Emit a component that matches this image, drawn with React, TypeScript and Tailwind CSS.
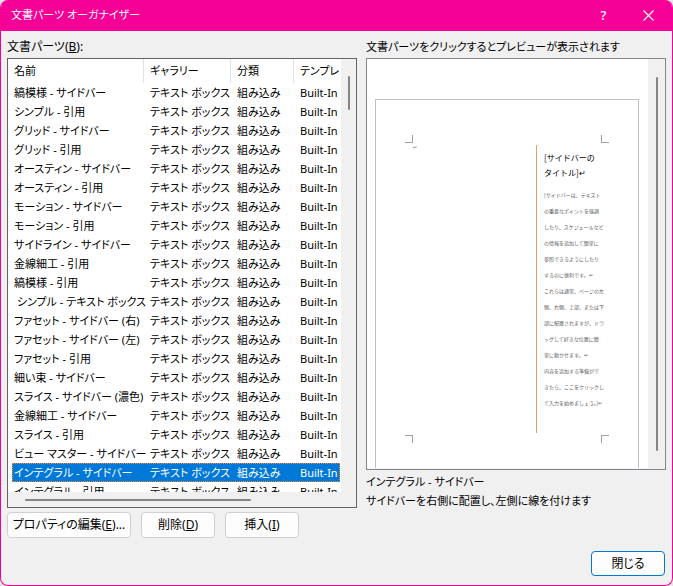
import { useState } from "react";

type Part = { name: string; gallery: string; category: string; template: string };

const names = [
  "縞模様 - サイドバー",
  "シンプル - 引用",
  "グリッド - サイドバー",
  "グリッド - 引用",
  "オースティン - サイドバー",
  "オースティン - 引用",
  "モーション - サイドバー",
  "モーション - 引用",
  "サイドライン - サイドバー",
  "金線細工 - 引用",
  "縞模様 - 引用",
  "\u00a0シンプル - テキスト ボックス",
  "ファセット - サイドバー (右)",
  "ファセット - サイドバー (左)",
  "ファセット - 引用",
  "細い束 - サイドバー",
  "スライス - サイドバー (濃色)",
  "金線細工 - サイドバー",
  "スライス - 引用",
  "ビュー マスター - サイドバー",
  "インテグラル - サイドバー",
  "インテグラル - 引用",
];

const parts: Part[] = names.map((name) => ({
  name,
  gallery: "テキスト ボックス",
  category: "組み込み",
  template: "Built-In",
}));

const columns = ["名前", "ギャラリー", "分類", "テンプレート"];

const sidebarLines = [
  "[サイドバーは、テキスト",
  "の重要なポイントを強調",
  "したり、スケジュールなど",
  "の情報を追加して簡単に",
  "参照できるようにしたり",
  "するのに便利です。↵",
  "これらは通常、ページの左",
  "側、右側、上部、または下",
  "部に配置されますが、ドラ",
  "ッグして好きな位置に簡",
  "単に動かせます。↵",
  "内容を追加する準備がで",
  "きたら、ここをクリックし",
  "て入力を始めましょう。]↵",
];

function TitleBar() {
  return (
    <header className="flex h-[31px] shrink-0 items-center bg-[#f50097] pl-[10px] text-white">
      <h1 className="flex-1">文書パーツ オーガナイザー</h1>
      <button type="button" aria-label="ヘルプ" className="h-full w-[43px] text-[13px] font-medium">
        ?
      </button>
      <button type="button" aria-label="閉じる" className="flex h-full w-[47px] items-center justify-center">
        <svg width="11" height="11" viewBox="0 0 11 11" fill="none" stroke="currentColor" strokeWidth="1.1">
          <path d="M0.5 0.5L10.5 10.5M10.5 0.5L0.5 10.5" />
        </svg>
      </button>
    </header>
  );
}

function PartsList({ selected, onSelect }: { selected: number; onSelect: (index: number) => void }) {
  return (
    <div className="flex min-h-0 flex-1 border border-[#646464]">
      <div className="flex min-w-0 flex-1 flex-col">
        <div className="min-h-0 flex-1 overflow-hidden bg-white pr-px pl-1">
          <table
            aria-labelledby="parts-label"
            className="w-full table-fixed border-separate border-spacing-0 leading-[18px]"
          >
            <colgroup>
              <col className="w-[132px]" />
              <col className="w-[87px]" />
              <col className="w-[63px]" />
              <col />
            </colgroup>
            <thead>
              <tr className="h-6">
                {columns.map((column) => (
                  <th
                    key={column}
                    className="overflow-hidden border-r border-[#e2e2e2] pl-[6px] text-left font-normal whitespace-nowrap first:pl-[2px] last:border-r-0"
                  >
                    {column}
                  </th>
                ))}
              </tr>
            </thead>
            <tbody>
              {parts.map((part, index) => (
                <tr
                  key={part.name}
                  aria-selected={index === selected}
                  onClick={() => onSelect(index)}
                  className={`h-[19px] cursor-default whitespace-nowrap ${
                    index === selected
                      ? "bg-[#0078d7] text-white outline-1 -outline-offset-1 outline-dotted outline-[#ff8728]"
                      : ""
                  }`}
                >
                  <td className="pl-[2px]">{part.name}</td>
                  <td className="pl-[6px]">{part.gallery}</td>
                  <td className="pl-[6px]">{part.category}</td>
                  <td className="pl-[6px]">{part.template}</td>
                </tr>
              ))}
            </tbody>
          </table>
        </div>
        <div className="flex h-[15px] shrink-0 items-center pl-[17px]">
          <div className="h-[2px] w-[226px] rounded-full bg-[#858585]" />
        </div>
      </div>
      <div className="flex w-[15px] shrink-0 justify-center pt-[17px]">
        <div className="h-[34px] w-[2px] rounded-full bg-[#858585]" />
      </div>
    </div>
  );
}

function Preview() {
  return (
    <div className="flex min-h-0 flex-1 border border-[#828790] pb-px">
      <div className="min-w-0 flex-1 overflow-hidden bg-white pt-10 pr-[9px] pl-2">
        <div className="h-full border border-b-0 border-[#bfbfbf] px-[29px] pt-[35px]">
          <div className="flex justify-between">
            <span className="size-2 border-r border-b border-[#a0a0a0]" />
            <span className="size-2 border-b border-l border-[#a0a0a0]" />
          </div>
          <div className="mt-[2px] flex justify-between">
            <span className="pl-2 text-[5px] leading-[5px] text-[#808080]">↵</span>
            <div className="h-72 w-[73px] border-l border-[#f0986a] pt-[5px] pl-[7px] font-['Noto_Sans_CJK_JP',sans-serif] whitespace-nowrap [font-feature-settings:normal]">
              <p className="text-[8px] leading-[15px]">
                [サイドバーの
                <br />
                タイトル]↵
              </p>
              <div className="pt-[7px] text-[5px] leading-4 text-[#606060]">
                {sidebarLines.map((line) => (
                  <p key={line}>{line}</p>
                ))}
              </div>
            </div>
          </div>
          <div className="mt-[2px] flex justify-between">
            <span className="size-2 border-t border-r border-[#a0a0a0]" />
            <span className="size-2 border-t border-l border-[#a0a0a0]" />
          </div>
        </div>
      </div>
      <div className="flex w-[17px] shrink-0 justify-center pt-[18px] pb-[17px]">
        <div className="w-[2px] rounded-full bg-[#858585]" />
      </div>
    </div>
  );
}

function ActionButton({ label, accessKey, className }: { label: string; accessKey: string; className: string }) {
  return (
    <button
      type="button"
      className={`h-[26px] rounded border border-[#d0d0d0] bg-[#fdfdfd] text-[12px] whitespace-nowrap ${className}`}
    >
      {label}(<u>{accessKey}</u>){accessKey === "E" && "..."}
    </button>
  );
}

export default function App() {
  const [selected, setSelected] = useState(20);

  return (
    <div className="h-screen bg-[#e4e4e4]">
      <main className="flex h-full flex-col overflow-hidden rounded-lg border border-t-0 border-[#f50097] bg-[#f0f0f0] font-['Noto_Sans','Noto_Sans_CJK_JP',sans-serif] text-[11px] text-black [font-feature-settings:'palt']">
        <TitleBar />
        <div className="grid min-h-0 flex-1 grid-cols-[7fr_6fr] gap-[9px] px-[6px]">
          <section className="flex min-h-0 min-w-0 flex-col">
            <p id="parts-label" className="h-[27px] pt-[6px] text-[12px] leading-[19px]">
              文書パーツ(<u>B</u>):
            </p>
            <PartsList selected={selected} onSelect={setSelected} />
            <div className="flex gap-[10px] pt-1">
              <ActionButton label="プロパティの編集" accessKey="E" className="w-[124px]" />
              <ActionButton label="削除" accessKey="D" className="w-[74px]" />
              <ActionButton label="挿入" accessKey="I" className="w-[74px]" />
            </div>
          </section>
          <section className="flex min-h-0 min-w-0 flex-col leading-[19px]">
            <p className="h-[27px] pt-[6px]">文書パーツをクリックするとプレビューが表示されます</p>
            <Preview />
            <div className="h-[68px] pt-[2px]">
              <p>{parts[selected].name}</p>
              <p>サイドバーを右側に配置し、左側に線を付けます</p>
            </div>
          </section>
        </div>
        <footer className="flex justify-end px-[7px] pt-[13px] pb-[9px]">
          <button type="button" className="h-[25px] w-[74px] rounded border border-[#0078d7] bg-[#fdfdfd] text-[12px]">
            閉じる
          </button>
        </footer>
      </main>
    </div>
  );
}
